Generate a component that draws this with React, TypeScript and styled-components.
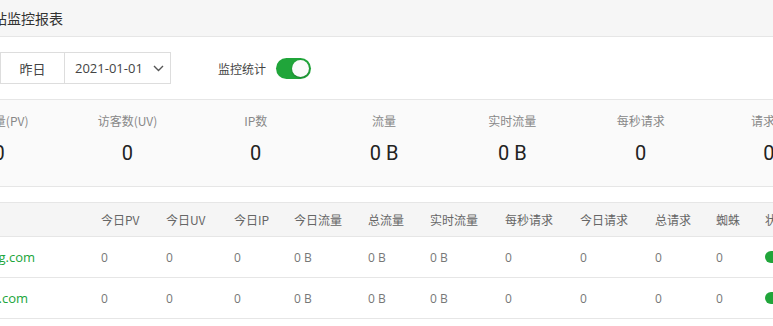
import React from "react";
import styled, { createGlobalStyle } from "styled-components";

const Global = createGlobalStyle`
  html, body { margin: 0; padding: 0; background: #fff; }
  body { overflow: hidden; font-family: "Open Sans", "Noto Sans CJK SC", sans-serif; }
  #root { width: 773px; height: 326px; overflow: hidden; }
`;

const Page = styled.div`
  width: 773px;
  overflow: hidden;
  background: #fff;
`;

const Header = styled.div`
  height: 36px;
  background: #f6f6f6;
  border-bottom: 1px solid #e6e6e6;
  display: flex;
  align-items: center;
`;

const Title = styled.h1`
  margin: 0 0 0 -21px;
  font-family: "Noto Sans CJK SC", sans-serif;
  font-size: 14px;
  font-weight: 400;
  color: #333;
  white-space: nowrap;
`;

const Controls = styled.div`
  height: 62px;
  display: flex;
  align-items: center;
  border-bottom: 1px solid #e6e6e6;
`;

const BtnGroup = styled.div`
  display: flex;
  margin-left: -64px;
`;

const DayBtn = styled.div`
  width: 63px;
  height: 30px;
  border: 1px solid #ddd;
  margin-right: -1px;
  display: flex;
  align-items: center;
  justify-content: center;
  font-family: "Noto Sans CJK SC", sans-serif;
  font-size: 13px;
  color: #444;
  background: #fff;
`;

const DateSelect = styled.div`
  width: 95px;
  height: 30px;
  border: 1px solid #ddd;
  padding-left: 10px;
  display: flex;
  align-items: center;
  gap: 10px;
  font-family: "Open Sans", sans-serif;
  font-size: 13px;
  color: #444;
  background: #fff;
`;

const SwitchLabel = styled.span`
  margin-left: 47px;
  margin-right: 10px;
  font-family: "Noto Sans CJK SC", sans-serif;
  font-size: 12px;
  color: #444;
`;

const Switch = styled.div<{ $w: number; $h: number }>`
  width: ${(p) => p.$w}px;
  height: ${(p) => p.$h}px;
  border-radius: ${(p) => p.$h / 2}px;
  background: #20a53a;
  display: flex;
  align-items: center;
  justify-content: flex-end;
  padding: 0 2px;
  box-sizing: border-box;
  flex-shrink: 0;
`;

const Knob = styled.div<{ $s: number }>`
  width: ${(p) => p.$s}px;
  height: ${(p) => p.$s}px;
  border-radius: 50%;
  background: #fafafa;
  box-shadow: 0 1px 2px rgba(0, 0, 0, 0.25);
`;

const Stats = styled.div`
  height: 86px;
  background: #fafafa;
  border-bottom: 1px solid #e6e6e6;
  display: grid;
  grid-template-columns: repeat(8, 128.3px);
  margin-left: -65px;
  width: 1100px;
`;

const Stat = styled.div`
  display: flex;
  flex-direction: column;
  align-items: center;
  padding-top: 12px;
`;

const StatLabel = styled.span`
  font-family: "Noto Sans CJK SC", sans-serif;
  font-size: 12px;
  color: #888;
  line-height: 18px;
`;

const StatValue = styled.span`
  margin-top: 10px;
  font-family: Roboto, sans-serif;
  font-size: 20px;
  color: #222;
  line-height: 26px;
`;

const Table = styled.div`
  margin-top: 15px;
  margin-left: -81px;
  border-top: 1px solid #e6e6e6;
`;

const cols = "172px 65px 68px 60px 74px 62px 75px 75px 75px 61px 49px 80px";

const Row = styled.div<{ $head?: boolean }>`
  display: grid;
  grid-template-columns: ${cols};
  height: ${(p) => (p.$head ? 33 : 40)}px;
  background: ${(p) => (p.$head ? "#f5f5f5" : "#fff")};
  border-bottom: 1px solid #e6e6e6;
  align-items: center;
`;

const HeadCell = styled.div`
  padding-left: 10px;
  font-family: "Noto Sans CJK SC", sans-serif;
  font-size: 12px;
  color: #666;
  white-space: nowrap;
`;

const Cell = styled.div`
  padding-left: 10px;
  font-family: "Open Sans", "Noto Sans CJK SC", sans-serif;
  font-size: 12px;
  color: #777;
  white-space: nowrap;
`;

const Domain = styled(Cell)`
  font-size: 13px;
  color: #20a53a;
`;

const Chevron = () => (
  <svg width="11" height="7" viewBox="0 0 11 7" fill="none">
    <path d="M1 1l4.5 4.5L10 1" stroke="#555" strokeWidth="1.4" />
  </svg>
);

const stats = [
  ["浏览量(PV)", "0"],
  ["访客数(UV)", "0"],
  ["IP数", "0"],
  ["流量", "0 B"],
  ["实时流量", "0 B"],
  ["每秒请求", "0"],
  ["请求数", "0"],
  ["蜘蛛数", "0"],
];

const heads = ["网站", "今日PV", "今日UV", "今日IP", "今日流量", "总流量", "实时流量", "每秒请求", "今日请求", "总请求", "蜘蛛", "状态"];

const rows = [
  { domain: "www.btming.com" },
  { domain: "www.btmin.com" },
];

export default function App() {
  return (
    <Page>
      <Global />
      <Header>
        <Title>网站监控报表</Title>
      </Header>
      <Controls>
        <BtnGroup>
          <DayBtn>今日</DayBtn>
          <DayBtn>昨日</DayBtn>
        </BtnGroup>
        <DateSelect>
          2021-01-01
          <Chevron />
        </DateSelect>
        <SwitchLabel>监控统计</SwitchLabel>
        <Switch $w={35} $h={21}>
          <Knob $s={17} />
        </Switch>
      </Controls>
      <Stats>
        {stats.map(([l, v]) => (
          <Stat key={l}>
            <StatLabel>{l}</StatLabel>
            <StatValue>{v}</StatValue>
          </Stat>
        ))}
      </Stats>
      <Table>
        <Row $head>
          {heads.map((h) => (
            <HeadCell key={h}>{h}</HeadCell>
          ))}
        </Row>
        {rows.map((r) => (
          <Row key={r.domain}>
            <Domain>{r.domain}</Domain>
            <Cell>0</Cell>
            <Cell>0</Cell>
            <Cell>0</Cell>
            <Cell>0 B</Cell>
            <Cell>0 B</Cell>
            <Cell>0 B</Cell>
            <Cell>0</Cell>
            <Cell>0</Cell>
            <Cell>0</Cell>
            <Cell>0</Cell>
            <Cell>
              <Switch $w={28} $h={12}>
                <Knob $s={9} />
              </Switch>
            </Cell>
          </Row>
        ))}
      </Table>
    </Page>
  );
}
